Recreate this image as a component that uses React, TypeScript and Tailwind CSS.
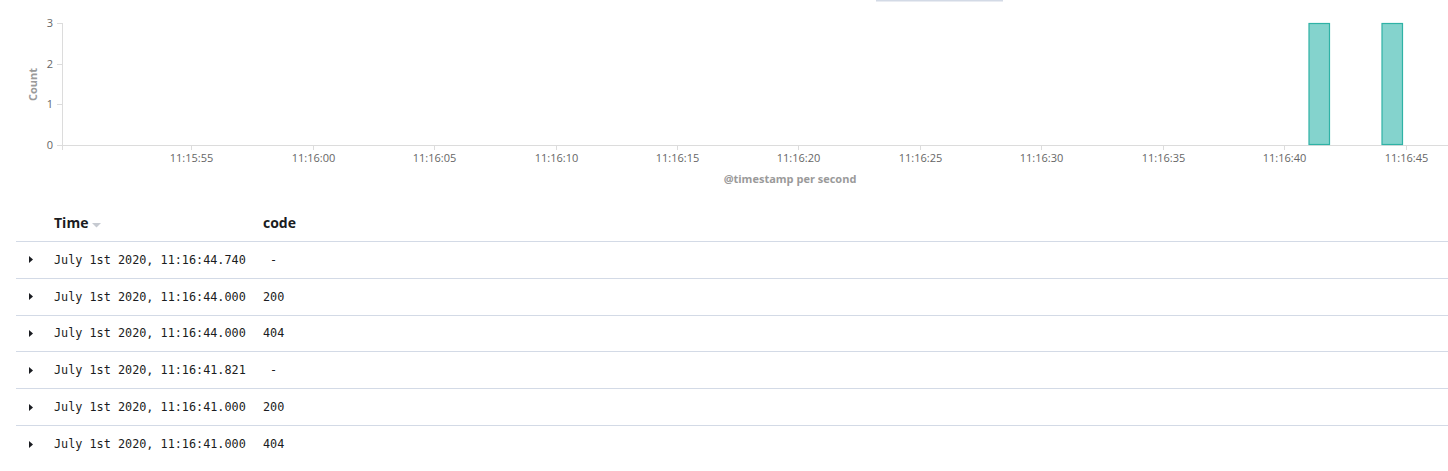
import React from "react";

const ticks = [
  "11:15:55",
  "11:16:00",
  "11:16:05",
  "11:16:10",
  "11:16:15",
  "11:16:20",
  "11:16:25",
  "11:16:30",
  "11:16:35",
  "11:16:40",
  "11:16:45",
];

const rows = [
  ["July 1st 2020, 11:16:44.740", " -"],
  ["July 1st 2020, 11:16:44.000", "200"],
  ["July 1st 2020, 11:16:44.000", "404"],
  ["July 1st 2020, 11:16:41.821", " -"],
  ["July 1st 2020, 11:16:41.000", "200"],
  ["July 1st 2020, 11:16:41.000", "404"],
];

function Chart() {
  const y0 = 145;
  const y3 = 23;
  const unit = (y0 - y3) / 3;
  return (
    <svg width={1448} height={195} className="block" style={{ fontFamily: "'Open Sans', sans-serif" }}>
      <rect x={876} y={0} width={127} height={1.5} fill="#d3dae6" />
      {/* y axis */}
      <line x1={62.5} y1={y3} x2={62.5} y2={y0} stroke="#dcdcdc" strokeWidth={1} />
      {[0, 1, 2, 3].map((v) => {
        const y = Math.round(y0 - v * unit) + 0.5;
        return (
          <g key={v}>
            <line x1={57} y1={y} x2={62} y2={y} stroke="#dcdcdc" />
            <text x={53} y={y + 3.5} textAnchor="end" fontSize={11} fill="#666666">
              {v}
            </text>
          </g>
        );
      })}
      <text
        x={0}
        y={0}
        transform="translate(37 84.5) rotate(-90)"
        textAnchor="middle"
        fontSize={11}
        fontWeight={700}
        fill="#9a9a9a"
      >
        Count
      </text>
      {/* x axis */}
      <line x1={62} y1={145.5} x2={1448} y2={145.5} stroke="#dcdcdc" />
      <line x1={62.5} y1={145} x2={62.5} y2={150} stroke="#dcdcdc" />
      {ticks.map((t, i) => {
        const x = Math.round(191.3 + i * 121.42) + 0.5;
        return (
          <g key={t}>
            <line x1={x} y1={145} x2={x} y2={150} stroke="#dcdcdc" />
            <text x={x} y={161.5} textAnchor="middle" fontSize={11} fill="#666666">
              {t}
            </text>
          </g>
        );
      })}
      <text x={790} y={182.5} textAnchor="middle" fontSize={11} fontWeight={700} fill="#9a9a9a">
        @timestamp per second
      </text>
      {/* bars */}
      <rect x={1309} y={23.5} width={20.5} height={121} fill="#84d3cd" stroke="#2fb2a6" strokeWidth={1.2} />
      <rect x={1382} y={23.5} width={20.5} height={121} fill="#84d3cd" stroke="#2fb2a6" strokeWidth={1.2} />
    </svg>
  );
}

export default function App() {
  return (
    <div className="w-[1448px] h-[471px] bg-white overflow-hidden">
      <Chart />
      <div className="ml-[16px]">
        <div className="flex items-end h-[47px] pb-[8px] border-b border-[#d3dae6] font-['Open_Sans',sans-serif] text-[14px] leading-[20px] font-bold text-[#1a1c21]">
          <div className="w-[38px]" />
          <div className="w-[209px] flex items-center">
            <span>Time</span>
            <svg width={9} height={5} className="ml-[4px] mt-[5px]" viewBox="0 0 9 5">
              <path d="M0 0 L9 0 L4.5 4.5 Z" fill="#c6cad1" />
            </svg>
          </div>
          <div>code</div>
        </div>
        {rows.map((r, i) => (
          <div
            key={i}
            className={
              i < rows.length - 1
                ? "flex items-center h-[36.8px] border-b border-[#d3dae6] font-['DejaVu_Sans_Mono',monospace] text-[11.8px] leading-[16px] text-[#1a1c21]"
                : "flex items-center h-[36.8px] font-['DejaVu_Sans_Mono',monospace] text-[11.8px] leading-[16px] text-[#1a1c21]"
            }
          >
            <div className="w-[38px] flex items-center pl-[13px]">
              <svg width={4} height={7} viewBox="0 0 4 7">
                <path d="M0 0 L4 3.5 L0 7 Z" fill="#1a1c21" />
              </svg>
            </div>
            <div className="w-[209px] whitespace-pre">{r[0]}</div>
            <div className="whitespace-pre">{r[1]}</div>
          </div>
        ))}
      </div>
    </div>
  );
}
